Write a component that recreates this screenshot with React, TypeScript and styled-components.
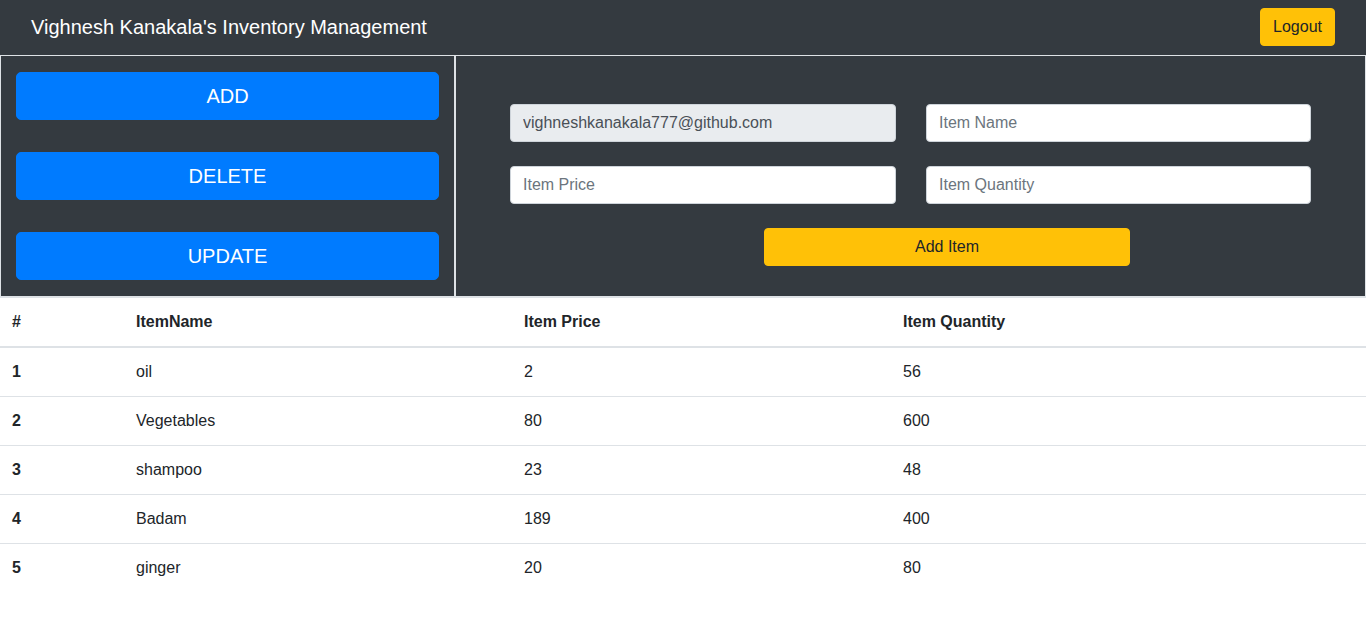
import React from "react";
import styled, { createGlobalStyle } from "styled-components";

const Global = createGlobalStyle`
  * { box-sizing: border-box; }
  body {
    margin: 0;
    font-family: "Liberation Sans", Arial, sans-serif;
    font-size: 16px;
    line-height: 1.5;
    color: #212529;
    background: #fff;
  }
`;

const NavBar = styled.nav`
  height: 55px;
  background: #343a40;
  display: flex;
  align-items: center;
  justify-content: space-between;
  padding: 0 31px 1px 31px;
`;

const Brand = styled.div`
  color: #fff;
  font-size: 20px;
  line-height: 30px;
`;

const YellowButton = styled.button<{ $width?: number }>`
  background: #ffc107;
  color: #212529;
  border: 1px solid #ffc107;
  border-radius: 4px;
  font-family: inherit;
  font-size: 16px;
  line-height: 24px;
  height: 38px;
  padding: 0 12px;
  width: ${(p) => (p.$width ? `${p.$width}px` : "auto")};
  cursor: pointer;
`;

const Panels = styled.div`
  display: grid;
  grid-template-columns: 455px 1fr;
  background: #343a40;
`;

const Panel = styled.div`
  border: 1px solid #dee2e6;
  height: 242px;
`;

const ActionPanel = styled(Panel)`
  display: flex;
  flex-direction: column;
  gap: 32px;
  padding: 16px 15px;
`;

const ActionButton = styled.button`
  height: 48px;
  width: 100%;
  background: #007bff;
  color: #fff;
  border: 1px solid #007bff;
  border-radius: 5px;
  font-family: inherit;
  font-size: 20px;
  cursor: pointer;
`;

const FormPanel = styled(Panel)`
  padding: 48px 53px 0 54px;
`;

const FieldGrid = styled.div`
  display: grid;
  grid-template-columns: 386px 385px;
  column-gap: 30px;
  row-gap: 24px;
`;

const Field = styled.input<{ $readOnly?: boolean }>`
  height: 38px;
  width: 100%;
  padding: 6px 12px;
  border: 1px solid #ced4da;
  border-radius: 4px;
  font-family: inherit;
  font-size: 16px;
  color: #495057;
  background: ${(p) => (p.$readOnly ? "#e9ecef" : "#fff")};
  outline: none;
  &::placeholder { color: #6c757d; }
`;

const SubmitRow = styled.div`
  margin-top: 24px;
  padding-left: 254px;
`;

const Table = styled.table`
  width: 100%;
  border-collapse: collapse;
  table-layout: fixed;
`;

const HeadCell = styled.th`
  text-align: left;
  font-weight: bold;
  padding: 12px;
  line-height: 24px;
  border-top: 1px solid #dee2e6;
  border-bottom: 2px solid #dee2e6;
`;

const Cell = styled.td<{ $bold?: boolean }>`
  padding: 12px;
  line-height: 24px;
  border-top: 1px solid #dee2e6;
  font-weight: ${(p) => (p.$bold ? "bold" : "normal")};
`;

const rows = [
  { name: "oil", price: 2, qty: 56 },
  { name: "Vegetables", price: 80, qty: 600 },
  { name: "shampoo", price: 23, qty: 48 },
  { name: "Badam", price: 189, qty: 400 },
  { name: "ginger", price: 20, qty: 80 },
];

export default function App() {
  return (
    <>
      <Global />
      <NavBar>
        <Brand>Vighnesh Kanakala's Inventory Management</Brand>
        <YellowButton>Logout</YellowButton>
      </NavBar>
      <Panels>
        <ActionPanel>
          <ActionButton>ADD</ActionButton>
          <ActionButton>DELETE</ActionButton>
          <ActionButton>UPDATE</ActionButton>
        </ActionPanel>
        <FormPanel>
          <FieldGrid>
            <Field $readOnly readOnly value="vighneshkanakala777@github.com" />
            <Field placeholder="Item Name" />
            <Field placeholder="Item Price" />
            <Field placeholder="Item Quantity" />
          </FieldGrid>
          <SubmitRow>
            <YellowButton $width={366}>Add Item</YellowButton>
          </SubmitRow>
        </FormPanel>
      </Panels>
      <Table>
        <colgroup>
          <col style={{ width: 124 }} />
          <col style={{ width: 388 }} />
          <col style={{ width: 379 }} />
          <col />
        </colgroup>
        <thead>
          <tr>
            <HeadCell>#</HeadCell>
            <HeadCell>ItemName</HeadCell>
            <HeadCell>Item Price</HeadCell>
            <HeadCell>Item Quantity</HeadCell>
          </tr>
        </thead>
        <tbody>
          {rows.map((r, i) => (
            <tr key={i}>
              <Cell $bold>{i + 1}</Cell>
              <Cell>{r.name}</Cell>
              <Cell>{r.price}</Cell>
              <Cell>{r.qty}</Cell>
            </tr>
          ))}
        </tbody>
      </Table>
    </>
  );
}
